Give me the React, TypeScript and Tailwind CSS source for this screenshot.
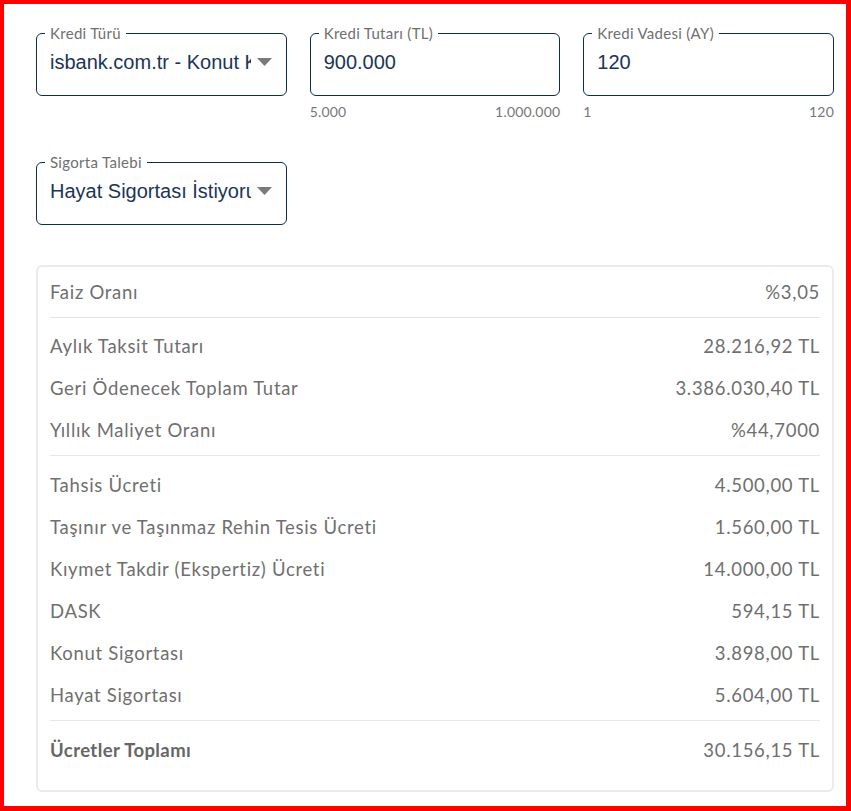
import React from "react";

const font = { fontFamily: "Lato, 'Open Sans', sans-serif" };

function Field({ label, value, select }: { label: string; value: string; select?: boolean }) {
  return (
    <div className="relative h-[63px] rounded-[6px] border border-[#0f2d4e] bg-white">
      <span className="absolute left-[8px] top-[-10px] bg-white px-[5px] text-[15px] leading-[18px] tracking-[0.3px] text-[#6f6f6f] font-['Lato',sans-serif]">
        {label}
      </span>
      <div className="flex h-full items-center pb-[5px] pl-[13px] pr-[14px]">
        <span className="min-w-0 flex-1 overflow-hidden whitespace-nowrap text-[20px] text-[#1b3556] font-['Liberation_Sans',Arial,sans-serif]">
          {value}
        </span>
        {select && (
          <svg width="15" height="8" viewBox="0 0 15 8" className="ml-[6px] shrink-0">
            <path d="M0 0 L15 0 L7.5 8 Z" fill="#7a7a7a" />
          </svg>
        )}
      </div>
    </div>
  );
}

function Row({ label, value, bold }: { label: string; value: string; bold?: boolean }) {
  return (
    <div className={`flex h-[42px] items-center justify-between pt-[2px] text-[18.5px] tracking-[0.7px] text-[#6f6f6f] ${bold ? "font-bold" : ""}`}>
      <span className={bold ? "text-[#666666] tracking-[0.4px]" : ""}>{label}</span>
      <span className="font-normal text-[#6f6f6f]">{value}</span>
    </div>
  );
}

export default function App() {
  return (
    <div className="h-[811px] w-[851px] border-[4px] border-r-[5px] border-b-[5px] border-[#ff0000] bg-white pl-[32px] pr-[12px] pt-[29px]" style={font}>
      <div className="grid grid-cols-3 gap-x-[23px]">
        <div>
          <Field label="Kredi Türü" value="isbank.com.tr - Konut Kredisi" select />
        </div>
        <div>
          <Field label="Kredi Tutarı (TL)" value="900.000" />
          <div className="mt-[8px] flex justify-between text-[14px] leading-[16px] tracking-[0.2px] text-[#777777]">
            <span>5.000</span>
            <span>1.000.000</span>
          </div>
        </div>
        <div>
          <Field label="Kredi Vadesi (AY)" value="120" />
          <div className="mt-[8px] flex justify-between text-[14px] leading-[16px] tracking-[0.2px] text-[#777777]">
            <span>1</span>
            <span>120</span>
          </div>
        </div>
      </div>
      <div className="mt-[42px] grid grid-cols-3 gap-x-[23px]">
        <Field label="Sigorta Talebi" value="Hayat Sigortası İstiyorum" select />
      </div>
      <div className="mt-[40px] rounded-[6px] border-2 border-[#ebebeb] px-[12px] pb-[19px]">
        <div className="pt-[4px] pb-[4px] border-b border-[#e6e6e6]">
          <Row label="Faiz Oranı" value="%3,05" />
        </div>
        <div className="pt-[7px] pb-[4px] border-b border-[#e6e6e6]">
          <Row label="Aylık Taksit Tutarı" value="28.216,92 TL" />
          <Row label="Geri Ödenecek Toplam Tutar" value="3.386.030,40 TL" />
          <Row label="Yıllık Maliyet Oranı" value="%44,7000" />
        </div>
        <div className="pt-[8px] pb-[4px] border-b border-[#e6e6e6]">
          <Row label="Tahsis Ücreti" value="4.500,00 TL" />
          <Row label="Taşınır ve Taşınmaz Rehin Tesis Ücreti" value="1.560,00 TL" />
          <Row label="Kıymet Takdir (Ekspertiz) Ücreti" value="14.000,00 TL" />
          <Row label="DASK" value="594,15 TL" />
          <Row label="Konut Sigortası" value="3.898,00 TL" />
          <Row label="Hayat Sigortası" value="5.604,00 TL" />
        </div>
        <div className="pt-[8px]">
          <Row label="Ücretler Toplamı" value="30.156,15 TL" bold />
        </div>
      </div>
    </div>
  );
}
